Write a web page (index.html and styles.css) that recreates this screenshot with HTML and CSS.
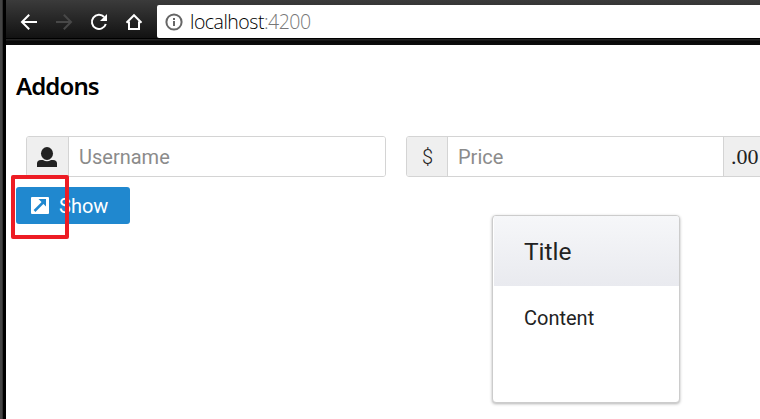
FILE: index.html
```html
<!DOCTYPE html>
<html lang="en">
<head>
<meta charset="utf-8">
<title>Addons</title>
<link rel="stylesheet" href="styles.css">
</head>
<body>
<div class="window">
  <header class="toolbar">
    <nav class="nav">
      <svg class="icon" viewBox="0 0 18 18"><path d="M17 9H2M9.200 1.800 2 9l7.200 7.200"/></svg>
      <svg class="icon dim" viewBox="0 0 18 18"><path d="M1 9h15M8.800 1.800 16 9l-7.200 7.200"/></svg>
      <svg class="icon" viewBox="0 0 18 18"><path d="M14.200 4A7.100 7.100 0 1 0 15.800 11"/><path class="solid" d="M17 1v7h-7z"/></svg>
      <svg class="icon" viewBox="0 0 18 18"><path d="M1.500 9.700 9 2.200l7.500 7.500M4 8.500V16h10V8.500"/></svg>
    </nav>
    <div class="address">
      <svg class="info" viewBox="0 0 18 18"><circle cx="9" cy="9" r="7.600"/><path d="M9 8v5M9 5v2"/></svg>
      <span class="url">localhost<span class="port">:4200</span></span>
    </div>
  </header>
  <main class="page">
    <h3 class="heading">Addons</h3>
    <div class="fields">
      <div class="group username">
        <span class="addon"><svg class="person" viewBox="0 0 20 20"><ellipse cx="10" cy="6.500" rx="6" ry="6.500"/><path d="M0 20v-3.500Q0 13 4 13h2q4 2.500 8 0h2q4 0 4 3.500V20z"/></svg></span>
        <input class="input" type="text" placeholder="Username">
      </div>
      <div class="group price">
        <span class="addon dollar">$</span>
        <input class="input" type="text" placeholder="Price">
        <span class="addon cents">.00</span>
      </div>
    </div>
    <button class="show" type="button">
      <svg class="launch" viewBox="0 0 18 17"><rect width="18" height="17" rx="1"/><path class="shaft" d="M3.500 14 12.500 5"/><path class="tip" d="M7.500 2H15v7.500z"/></svg>
      <span class="show-label">Show</span>
    </button>
  </main>
  <div class="highlight"></div>
  <section class="dialog">
    <div class="dialog-title">Title</div>
    <div class="dialog-content">Content</div>
  </section>
</div>
</body>
</html>
```
FILE: styles.css
```css
* { box-sizing: border-box; }
body { margin: 0; overflow: hidden; background: #fff; font-family: Roboto, sans-serif; }
.window {
  position: relative;
  height: 419px;
  overflow: hidden;
  padding-left: 6px;
  background: linear-gradient(90deg, #444 2px, #303030 2px, #303030 3px, #000 3px, #000 6px, #fff 6px);
}
.toolbar {
  display: flex;
  height: 45px;
  padding-top: 5px;
  background: linear-gradient(#3b3b3b 0, #121212 38px, #000 38px, #000 39px, #242424 39px, #242424 40px, #080808 41px, #0c0c0c 45px);
}
.nav { display: flex; width: 151px; padding: 8px 0 0 14px; gap: 17px; }
.icon { width: 18px; height: 18px; flex: none; fill: none; stroke: #fff; stroke-width: 2; }
.icon .solid { fill: #fff; stroke: none; }
.dim { stroke: #484848; }
.address { display: flex; flex: 1; height: 33px; padding-left: 8px; background: #fff; border-radius: 2px 0 0 2px; }
.info { width: 18px; height: 18px; margin-top: 8px; fill: none; stroke: #666; stroke-width: 2; }
.url { margin-left: 7px; font: 300 19.5px/33px "Open Sans", sans-serif; color: #000; letter-spacing: -0.5px; }
.port { color: #777; }
.page { padding: 26px 0 0 10px; }
.heading { margin: 0; font: 600 24px/30px "Noto Sans", sans-serif; letter-spacing: -0.9px; color: #000; }
.fields { display: flex; gap: 20px; padding: 35px 0 0 10px; }
.group { display: flex; height: 41px; flex: none; border: 1px solid #d4d4d4; border-radius: 3px; overflow: hidden; }
.username { width: 360px; }
.price { width: 362px; }
.addon { display: flex; align-items: center; justify-content: center; flex: none; width: 42px; background: #efefef; border-right: 1px solid #d4d4d4; color: #222; }
.person { width: 20px; height: 20px; margin: 1px 1px 0 0; fill: #222; }
.dollar { width: 41px; padding: 2px 0 0 1px; font: 300 20px/37px Roboto, sans-serif; }
.cents { border-right: 0; border-left: 1px solid #d4d4d4; justify-content: flex-start; width: 44px; padding: 1px 0 0 7px; font: 400 22px/38px "Liberation Serif", serif; }
.input { flex: 1; min-width: 0; padding: 2px 10px 0; border: 0; outline: 0; background: #fff; font: 400 20px/37px Roboto, sans-serif; color: #222; }
.input::placeholder { color: #8b8b8b; }
.show { display: flex; align-items: center; gap: 10px; width: 114px; height: 37px; margin-top: 10px; padding: 0 15px; border: 0; border-radius: 3px; background: #2088cf; color: #fff; font: 400 20px/35px Roboto, sans-serif; }
.show-label { padding-top: 2px; }
.launch { width: 18px; height: 17px; fill: #fff; }
.launch .shaft { stroke: #2088cf; stroke-width: 2.5; }
.launch .tip { fill: #2088cf; }
.highlight { position: absolute; left: 11px; top: 175px; width: 58px; height: 64px; border: 4px solid #ed1c24; border-radius: 2px; }
.dialog { position: absolute; left: 492px; top: 215px; width: 188px; height: 188px; border: 1px solid #ccc; border-radius: 4px; background: #fff; box-shadow: 0 1px 3px rgba(0, 0, 0, .3); color: #222; overflow: hidden; }
.dialog-title { height: 70px; margin-left: 1px; padding-left: 30px; background: linear-gradient(#f6f7f9, #e9eaef); font-size: 24.5px; line-height: 71px; }
.dialog-content { padding: 20px 0 0 31px; font-size: 20px; line-height: 24px; }
```
